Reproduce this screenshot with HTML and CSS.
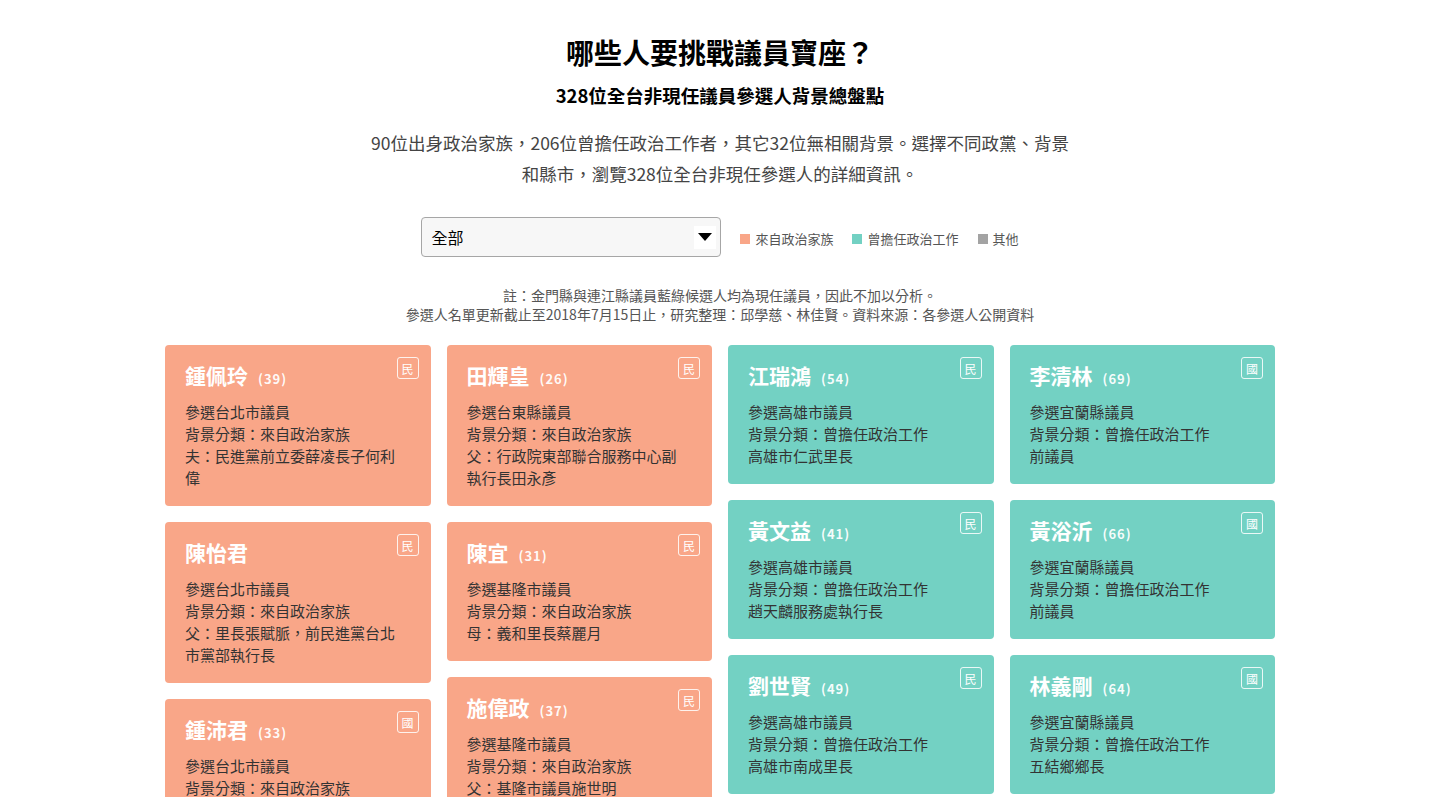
FILE: index.html
```html
<!DOCTYPE html>
<html lang="zh-Hant">
<head>
<meta charset="utf-8">
<title>哪些人要挑戰議員寶座？</title>
<link rel="stylesheet" href="styles.css">
</head>
<body>
<header class="head">
  <h1 class="title">哪些人要挑戰議員寶座？</h1>
  <h2 class="subtitle">328位全台非現任議員參選人背景總盤點</h2>
  <p class="lead">90位出身政治家族，206位曾擔任政治工作者，其它32位無相關背景。選擇不同政黨、背景和縣市，瀏覽328位全台非現任參選人的詳細資訊。</p>
</header>

<div class="controls">
  <div class="select">
    <span class="select-text">全部</span>
    <span class="select-arrow"><svg width="16" height="10" viewBox="0 0 16 10"><path d="M1 1 H15 L8 9 Z" fill="#000"/></svg></span>
  </div>
  <ul class="legend">
    <li><span class="sw sw-family"></span>來自政治家族</li>
    <li><span class="sw sw-work"></span>曾擔任政治工作</li>
    <li><span class="sw sw-other"></span>其他</li>
  </ul>
</div>

<div class="notes">
  <p>註：金門縣與連江縣議員藍綠候選人均為現任議員，因此不加以分析。</p>
  <p>參選人名單更新截止至2018年7月15日止，研究整理：邱學慈、林佳賢。資料來源：各參選人公開資料</p>
</div>

<main class="grid">
  <div class="col">
    <article class="card family">
      <span class="badge">民</span>
      <h3 class="name">鍾佩玲<span class="age">(39)</span></h3>
      <p class="info">參選台北市議員<br>背景分類：來自政治家族<br>夫：民進黨前立委薛凌長子何利偉</p>
    </article>
    <article class="card family">
      <span class="badge">民</span>
      <h3 class="name">陳怡君</h3>
      <p class="info">參選台北市議員<br>背景分類：來自政治家族<br>父：里長張賦脈，前民進黨台北市黨部執行長</p>
    </article>
    <article class="card family">
      <span class="badge">國</span>
      <h3 class="name">鍾沛君<span class="age">(33)</span></h3>
      <p class="info">參選台北市議員<br>背景分類：來自政治家族<br>父：前台北市議員</p>
    </article>
  </div>
  <div class="col">
    <article class="card family">
      <span class="badge">民</span>
      <h3 class="name">田輝皇<span class="age">(26)</span></h3>
      <p class="info">參選台東縣議員<br>背景分類：來自政治家族<br>父：行政院東部聯合服務中心副執行長田永彥</p>
    </article>
    <article class="card family">
      <span class="badge">民</span>
      <h3 class="name">陳宜<span class="age">(31)</span></h3>
      <p class="info">參選基隆市議員<br>背景分類：來自政治家族<br>母：義和里長蔡麗月</p>
    </article>
    <article class="card family">
      <span class="badge">民</span>
      <h3 class="name">施偉政<span class="age">(37)</span></h3>
      <p class="info">參選基隆市議員<br>背景分類：來自政治家族<br>父：基隆市議員施世明</p>
    </article>
  </div>
  <div class="col">
    <article class="card work">
      <span class="badge">民</span>
      <h3 class="name">江瑞鴻<span class="age">(54)</span></h3>
      <p class="info">參選高雄市議員<br>背景分類：曾擔任政治工作<br>高雄市仁武里長</p>
    </article>
    <article class="card work">
      <span class="badge">民</span>
      <h3 class="name">黃文益<span class="age">(41)</span></h3>
      <p class="info">參選高雄市議員<br>背景分類：曾擔任政治工作<br>趙天麟服務處執行長</p>
    </article>
    <article class="card work">
      <span class="badge">民</span>
      <h3 class="name">劉世賢<span class="age">(49)</span></h3>
      <p class="info">參選高雄市議員<br>背景分類：曾擔任政治工作<br>高雄市南成里長</p>
    </article>
  </div>
  <div class="col">
    <article class="card work">
      <span class="badge">國</span>
      <h3 class="name">李清林<span class="age">(69)</span></h3>
      <p class="info">參選宜蘭縣議員<br>背景分類：曾擔任政治工作<br>前議員</p>
    </article>
    <article class="card work">
      <span class="badge">國</span>
      <h3 class="name">黃浴沂<span class="age">(66)</span></h3>
      <p class="info">參選宜蘭縣議員<br>背景分類：曾擔任政治工作<br>前議員</p>
    </article>
    <article class="card work">
      <span class="badge">國</span>
      <h3 class="name">林義剛<span class="age">(64)</span></h3>
      <p class="info">參選宜蘭縣議員<br>背景分類：曾擔任政治工作<br>五結鄉鄉長</p>
    </article>
  </div>
</main>
</body>
</html>
```

FILE: styles.css
```css
* { box-sizing: border-box; }
html, body {
  margin: 0;
  padding: 0;
  background: #fff;
  font-family: "Noto Sans CJK TC", "Noto Sans", sans-serif;
  color: #333;
}
.head {
  text-align: center;
  padding-top: 31px;
}
.title {
  margin: 0;
  font-size: 28px;
  line-height: 42px;
  font-weight: 700;
  color: #000;
}
.subtitle {
  margin: 9px 0 0;
  font-size: 18.5px;
  line-height: 26px;
  font-weight: 700;
  color: #000;
}
.lead {
  margin: 19px auto 0;
  width: 706px;
  font-size: 17.5px;
  line-height: 31px;
  color: #444;
}
.controls {
  display: flex;
  justify-content: center;
  align-items: center;
  gap: 19px;
  margin-top: 28px;
}
.select {
  width: 300px;
  height: 40px;
  border: 1px solid #a6a6a6;
  border-radius: 4px;
  background: #f7f7f7;
  display: flex;
  align-items: center;
  justify-content: space-between;
  padding: 0 4px 0 9px;
}
.select-text {
  font-size: 16px;
  color: #000;
}
.select-arrow {
  width: 22px;
  height: 23px;
  background: #fff;
  display: flex;
  align-items: center;
  justify-content: center;
}
.legend {
  list-style: none;
  margin: 0;
  padding: 0;
  display: flex;
  gap: 19px;
  font-size: 13px;
  color: #555;
  padding-top: 3px;
}
.legend li {
  display: flex;
  align-items: center;
  gap: 5px;
}
.sw {
  width: 10px;
  height: 10px;
  display: inline-block;
}
.sw-family { background: #f9a688; }
.sw-work { background: #73d1c3; }
.sw-other { background: #a3a3a3; }
.notes {
  text-align: center;
  margin-top: 29px;
  font-size: 14px;
  line-height: 19px;
  color: #555;
}
.notes p { margin: 0; }
.grid {
  display: flex;
  justify-content: center;
  gap: 16px;
  margin-top: 21px;
}
.col {
  width: 265.5px;
  display: flex;
  flex-direction: column;
  gap: 16px;
}
.card {
  position: relative;
  border-radius: 4px;
  padding: 17px 20px 17px;
}
.card.family { background: #f9a688; }
.card.work { background: #73d1c3; }
.badge {
  position: absolute;
  top: 12px;
  right: 12px;
  width: 22px;
  height: 22px;
  border: 1px solid rgba(255,255,255,0.85);
  border-radius: 3px;
  color: #fff;
  font-size: 12px;
  display: flex;
  align-items: center;
  justify-content: center;
}
.name {
  margin: 0 0 13px;
  font-size: 21px;
  line-height: 26px;
  height: 26px;
  font-weight: 700;
  color: #fff;
}
.age {
  font-size: 13px;
  line-height: 1;
  margin-left: 10px;
  letter-spacing: 1px;
  font-weight: 700;
  color: rgba(255,255,255,0.95);
}
.info {
  margin: 0;
  font-size: 15px;
  line-height: 22px;
  color: #333;
  padding-right: 10px;
}
```
